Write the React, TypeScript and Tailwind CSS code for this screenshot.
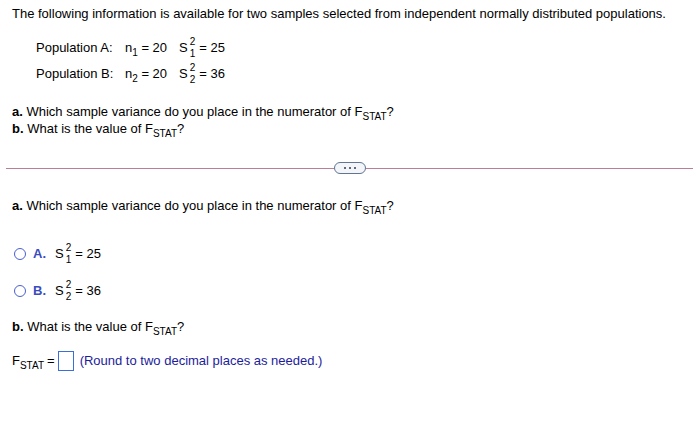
import React from "react";

const font = { fontFamily: '"Liberation Sans", Arial, sans-serif' };

function Sub({ children }: { children: React.ReactNode }) {
  return <span className="relative top-[4px] text-[10px] leading-none">{children}</span>;
}

// S with a stacked superscript 2 and a subscript index
function S2({ idx }: { idx: string }) {
  return (
    <span className="inline-flex items-center">
      <span>S</span>
      <span className="ml-[2px] inline-flex flex-col text-[10px] leading-[12px]">
        <span>2</span>
        <span>{idx}</span>
      </span>
    </span>
  );
}

function FStat() {
  return (
    <span>
      F<Sub>STAT</Sub>
    </span>
  );
}

function Radio({ label, idx, val }: { label: string; idx: string; val: string }) {
  return (
    <div className="flex h-[24px] items-center pl-[14px]">
      <span className="h-[12px] w-[12px] rounded-full border-[1.5px] border-[#4a5fd0]" />
      <span className="ml-[7px] w-[22px] font-bold text-[#3b4cc0]">{label}</span>
      <S2 idx={idx} />
      <span className="ml-[4px]">= {val}</span>
    </div>
  );
}

export default function App() {
  return (
    <div className="h-[431px] w-[693px] bg-white text-[13px] text-black" style={font}>
      <div className="pl-[12px] pt-[6px] leading-4">
        The following information is available for two samples selected from independent normally distributed populations.
      </div>

      <div className="mt-[13px] pl-[36px]">
        <div className="flex h-[26px] items-center">
          <span className="w-[89px]">Population A:</span>
          <span>
            n<Sub>1</Sub> = 20
          </span>
          <span className="ml-[12px] inline-flex items-center">
            <S2 idx="1" />
            <span className="ml-[4px]">= 25</span>
          </span>
        </div>
        <div className="flex h-[26px] items-center">
          <span className="w-[89px]">Population B:</span>
          <span>
            n<Sub>2</Sub> = 20
          </span>
          <span className="ml-[12px] inline-flex items-center">
            <S2 idx="2" />
            <span className="ml-[4px]">= 36</span>
          </span>
        </div>
      </div>

      <div className="mt-[16px] pl-[12px]">
        <div className="h-[17px] leading-[17px]">
          <b>a.</b> Which sample variance do you place in the numerator of <FStat />?
        </div>
        <div className="h-[17px] leading-[17px]">
          <b>b.</b> What is the value of <FStat />?
        </div>
      </div>

      <div className="mt-[25px] flex h-[12px] items-center pl-[6px]">
        <div className="h-px flex-1 bg-[#b97f98]" />
        <div className="flex h-[12px] w-[32px] items-center justify-center gap-[3px] rounded-full border border-[#5f7592] bg-[#f3f5f8]">
          <span className="h-[2px] w-[2px] bg-[#5f6b7a]" />
          <span className="h-[2px] w-[2px] bg-[#5f6b7a]" />
          <span className="h-[2px] w-[2px] bg-[#5f6b7a]" />
        </div>
        <div className="h-px flex-1 bg-[#b97f98]" />
      </div>

      <div className="mt-[23px] h-[17px] pl-[12px] leading-[17px]">
        <b>a.</b> Which sample variance do you place in the numerator of <FStat />?
      </div>

      <div className="mt-[28px]">
        <Radio label="A." idx="1" val="25" />
        <div className="h-[13px]" />
        <Radio label="B." idx="2" val="36" />
      </div>

      <div className="mt-[15px] h-[17px] pl-[12px] leading-[17px]">
        <b>b.</b> What is the value of <FStat />?
      </div>

      <div className="mt-[14px] flex h-[24px] items-center pl-[12px]">
        <FStat />
        <span className="ml-[3px]">=</span>
        <span className="ml-[3px] h-[20px] w-[16px] border border-[#3a6fd8]" />
        <span className="ml-[6px] text-[#1c1c9c]">(Round to two decimal places as needed.)</span>
      </div>
    </div>
  );
}
